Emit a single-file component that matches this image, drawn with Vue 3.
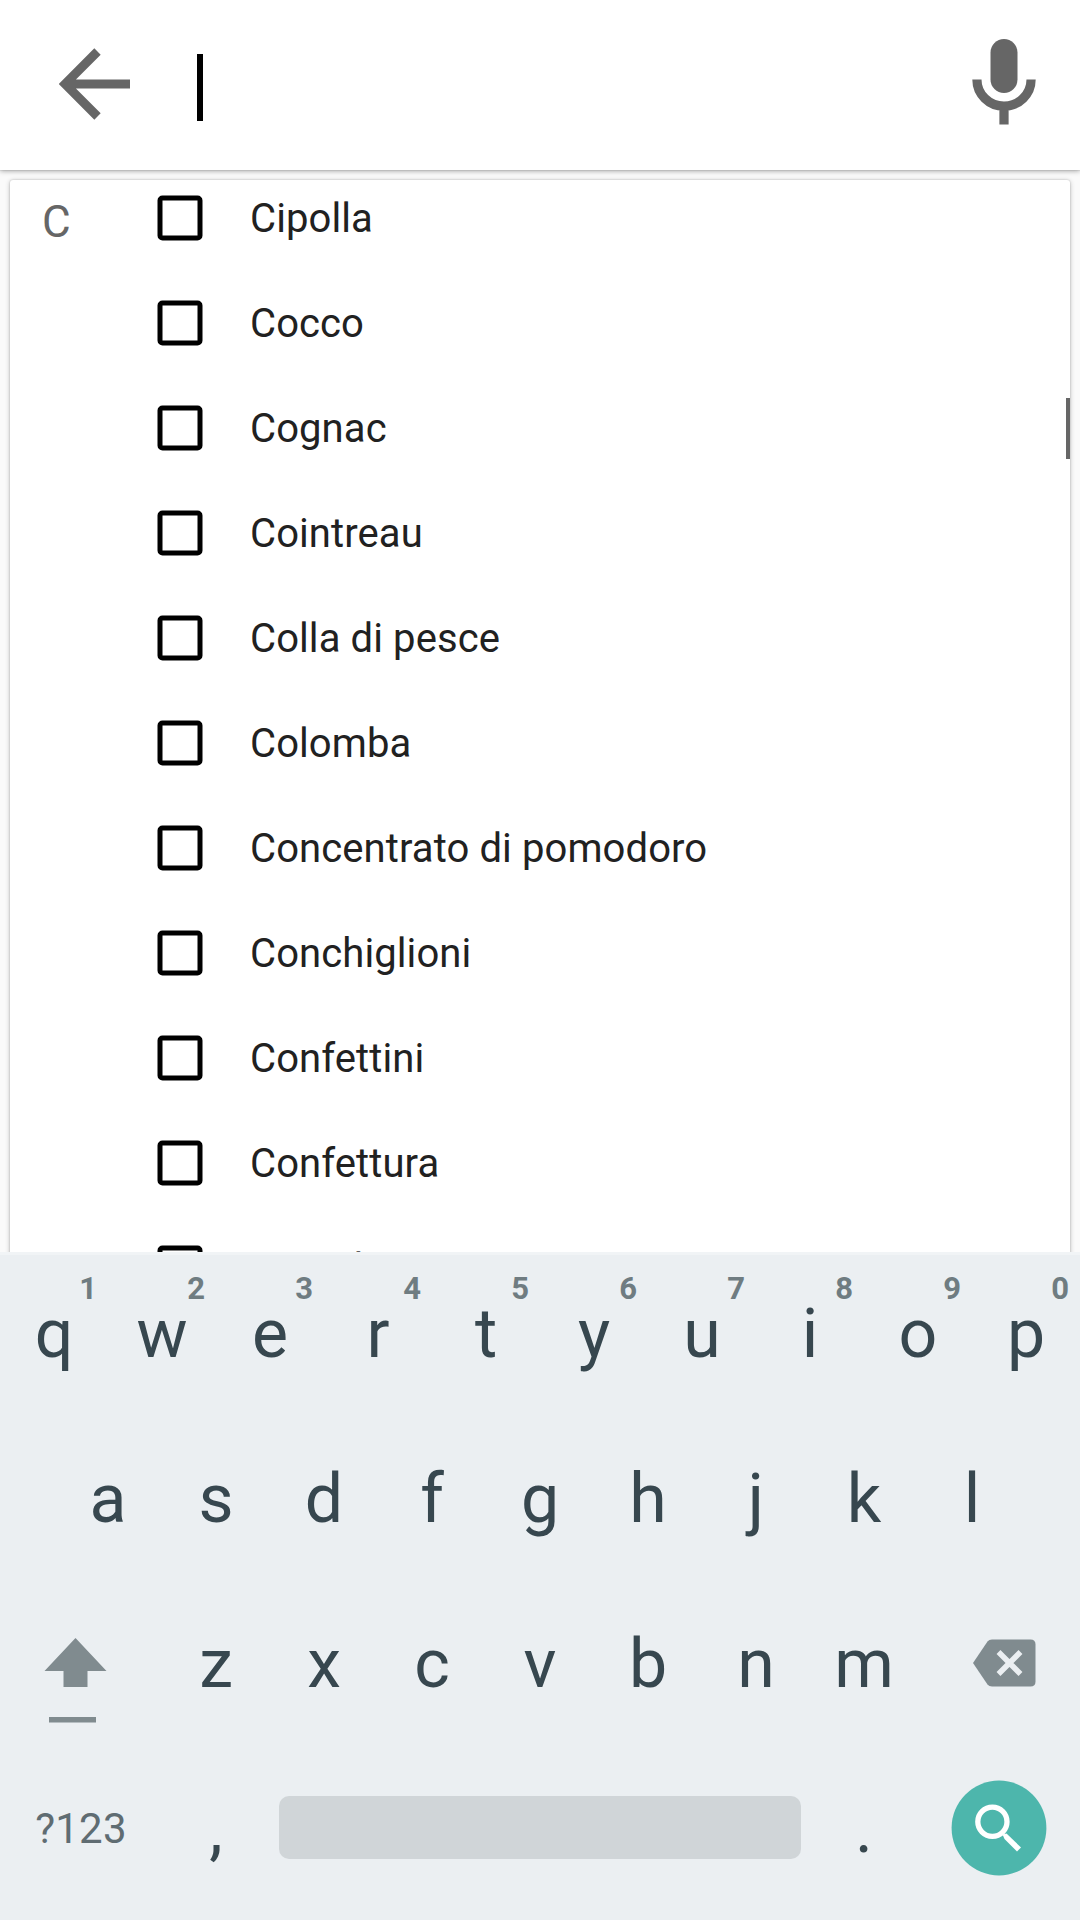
<script setup>
const items = [
  'Cipolla', 'Cocco', 'Cognac', 'Cointreau', 'Colla di pesce', 'Colomba',
  'Concentrato di pomodoro', 'Conchiglioni', 'Confettini', 'Confettura', 'Coniglio',
]
const topKeys = [...'qwertyuiop'].map((letter, i) => ({ letter, hint: (i + 1) % 10 }))
const homeKeys = [...'asdfghjkl']
const bottomKeys = [...'zxcvbnm']
</script>

<template>
  <div class="screen">
    <header class="search-bar">
      <svg class="back" viewBox="0 0 72 72">
        <path d="M38.5 3.5 6 36l32.500 32.500M7 36h64" fill="none" stroke="#666" stroke-width="9" />
      </svg>
      <span class="caret"></span>
      <svg class="mic" viewBox="0 0 24 24">
        <rect x="9" y="2" width="6" height="12" rx="3" fill="#666" />
        <path d="M5.980 11a6.020 5.930 0 0 0 12.040 0M12 17v4" fill="none" stroke="#666" stroke-width="2.050" />
      </svg>
    </header>

    <main class="content">
      <section class="card">
        <div class="section-letter">C</div>
        <ul class="list">
          <li v-for="item in items" :key="item" class="item">
            <svg class="checkbox" viewBox="0 0 46 46">
              <rect x="3" y="3" width="40" height="40" rx="2.500" fill="none" stroke="#000" stroke-width="5" />
            </svg>
            <span>{{ item }}</span>
          </li>
        </ul>
        <span class="scroll-thumb"></span>
      </section>
    </main>

    <div class="keyboard">
      <div class="rows">
        <div class="row">
          <div v-for="key in topKeys" :key="key.letter" class="key">
            {{ key.letter }}<span class="hint">{{ key.hint }}</span>
          </div>
        </div>
        <div class="row">
          <div v-for="key in homeKeys" :key="key" class="key">{{ key }}</div>
        </div>
        <div class="row">
          <div class="key wide">
            <svg class="shift" viewBox="0 0 64 86">
              <path d="M32.500 0 63.500 33H44.500V49H20.500V33H1.500z" fill="#808b8f" />
              <path d="M6 79h47v5.500H6z" fill="#808b8f" />
            </svg>
          </div>
          <div v-for="key in bottomKeys" :key="key" class="key">{{ key }}</div>
          <div class="key wide">
            <svg class="delete" viewBox="0 0 64 48">
              <path d="M20 .500H58.500Q63.500.500 63.500 5.500V42.500Q63.500 47.500 58.500 47.500H20Q17 47.500 15.500 45.500L1 24 15.500 2.500Q17 .500 20 .500z" fill="#808b8f" />
              <path d="M26.500 13 48.500 35M48.500 13 26.500 35" stroke="#ebeff2" stroke-width="5.500" />
            </svg>
          </div>
        </div>
        <div class="row">
          <div class="key wide symbols">?123</div>
          <div class="key">,</div>
          <div class="space"><div class="space-bar"></div></div>
          <div class="key">.</div>
          <div class="key wide">
            <svg class="enter" viewBox="0 0 96 96">
              <circle cx="48" cy="48" r="47.400" fill="#4db6ac" />
              <circle cx="41.400" cy="41.700" r="14.600" fill="none" stroke="#fff" stroke-width="5.300" />
              <path d="M51.500 54.500 55.500 53.500 70 67.500 66 71.500 53.500 59z" fill="#fff" />
            </svg>
          </div>
        </div>
      </div>
    </div>
  </div>
</template>

<style>
body {
  margin: 0;
}
</style>

<style scoped>
.screen {
  display: flex;
  flex-direction: column;
  width: 1080px;
  height: 1920px;
  overflow: hidden;
  background: #fafafa;
  font-family: Roboto, "Liberation Sans", sans-serif;
}
.search-bar {
  position: relative;
  z-index: 1;
  box-sizing: border-box;
  flex: none;
  display: flex;
  align-items: flex-start;
  height: 170px;
  padding: 0 22px 0 59px;
  background: #fff;
  box-shadow: 0 0 1px rgba(0, 0, 0, 0.3), 0 1px 5px rgba(0, 0, 0, 0.35);
}
.back {
  width: 72px;
  height: 72px;
  margin-top: 48px;
}
.caret {
  width: 6px;
  height: 67px;
  margin: 54px 0 0 66px;
  background: #000;
}
.mic {
  width: 108px;
  height: 108px;
  margin: 30px 0 0 auto;
}
.content {
  flex: none;
  box-sizing: border-box;
  height: 1082px;
  padding: 10px 10px 0;
  overflow: hidden;
}
.card {
  position: relative;
  display: flex;
  height: 1090px;
  overflow: hidden;
  border-radius: 3px;
  background: #fff;
  box-shadow: 0 0 2px rgba(0, 0, 0, 0.2), 0 1px 5px rgba(0, 0, 0, 0.25);
}
.section-letter {
  width: 147px;
  padding: 20px 0 0 32px;
  box-sizing: border-box;
  font-size: 44px;
  line-height: 44px;
  color: #666;
}
.list {
  flex: 1;
  margin: -14.500px 0 0;
  padding: 0;
  list-style: none;
}
.item {
  display: flex;
  align-items: center;
  height: 105px;
  font-size: 40px;
  letter-spacing: 0.100px;
  color: #212121;
  white-space: nowrap;
}
.checkbox {
  width: 46px;
  height: 46px;
  margin-right: 47px;
}
.scroll-thumb {
  position: absolute;
  top: 218px;
  right: 0;
  width: 4px;
  height: 61px;
  background: #666;
}
.keyboard {
  flex: 1;
  background: #ebeff2;
  box-shadow: inset 0 3px #f1f4f6;
}
.rows {
  margin-top: -1px;
}
.row {
  display: flex;
  justify-content: center;
  height: 165px;
}
.key {
  position: relative;
  display: flex;
  align-items: center;
  justify-content: center;
  width: 108px;
  font-size: 68px;
  color: #37474f;
}
.wide {
  width: 162px;
}
.hint {
  position: absolute;
  top: 20px;
  right: 11px;
  font-size: 31px;
  font-weight: 700;
  line-height: 36px;
  color: #6f7c81;
}
.symbols {
  font-size: 42px;
  letter-spacing: 0.200px;
  color: #5f6c72;
}
.shift {
  width: 64px;
  height: 86px;
  margin: 34px 12px 0 0;
}
.delete {
  width: 64px;
  height: 48px;
  margin: 0 0 2px 9px;
}
.enter {
  width: 96px;
  height: 96px;
  margin-bottom: 1px;
}
.space {
  display: flex;
  align-items: center;
  width: 540px;
}
.space-bar {
  width: 522px;
  height: 63px;
  margin: 0 auto 2px;
  border-radius: 10px;
  background: #d0d5d8;
}
</style>
